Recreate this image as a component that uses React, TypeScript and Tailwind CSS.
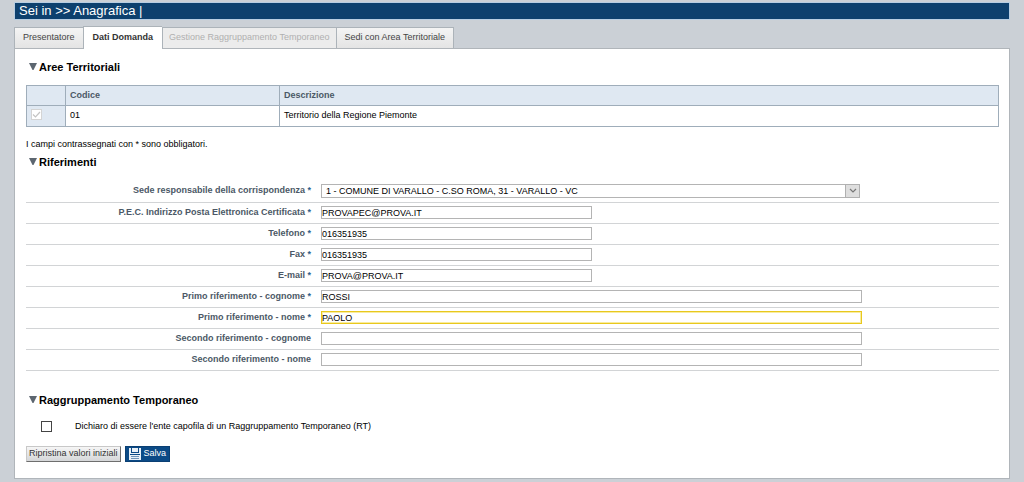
import React, { useState } from 'react';

interface Field {
  id: string;
  label: string;
  value: string;
  required?: boolean;
  wide?: boolean;
}

const TABS = [
  { id: 'presentatore', label: 'Presentatore' },
  { id: 'domanda', label: 'Dati Domanda' },
  { id: 'gestione', label: 'Gestione Raggruppamento Temporaneo', disabled: true },
  { id: 'sedi', label: 'Sedi con Area Territoriale' },
];

const FIELDS: Field[] = [
  { id: 'pec', label: 'P.E.C. Indirizzo Posta Elettronica Certificata', value: 'PROVAPEC@PROVA.IT', required: true },
  { id: 'telefono', label: 'Telefono', value: '016351935', required: true },
  { id: 'fax', label: 'Fax', value: '016351935', required: true },
  { id: 'email', label: 'E-mail', value: 'PROVA@PROVA.IT', required: true },
  { id: 'cognome1', label: 'Primo riferimento - cognome', value: 'ROSSI', required: true, wide: true },
  { id: 'nome1', label: 'Primo riferimento - nome', value: 'PAOLO', required: true, wide: true },
  { id: 'cognome2', label: 'Secondo riferimento - cognome', value: '', wide: true },
  { id: 'nome2', label: 'Secondo riferimento - nome', value: '', wide: true },
];

const SEDE = '1 - COMUNE DI VARALLO - C.SO ROMA, 31 - VARALLO - VC';

function SectionTitle({ children }: { children: React.ReactNode }) {
  return (
    <h2 className="flex items-center gap-0.5 pl-[3px] text-[11px] leading-4 font-bold text-black">
      <svg className="h-2 w-2" viewBox="0 0 8 8" aria-hidden="true">
        <path d="M0 0h8L4.5 7h-1z" fill="#5c6670" />
      </svg>
      {children}
    </h2>
  );
}

interface FormRowProps {
  id: string;
  label: string;
  required?: boolean;
  children: React.ReactNode;
}

function FormRow({ id, label, required, children }: FormRowProps) {
  return (
    <div className="grid grid-cols-[285px_minmax(0,1fr)] items-start gap-2.5 border-b border-[#d2d4d6] pt-[3px] pb-1">
      <label htmlFor={id} className="text-right text-[9px] leading-3 font-bold text-[#4b5866]">
        {label}
        {required && <span className="text-[#2f5f8c]"> *</span>}
      </label>
      {children}
    </div>
  );
}

function SaveIcon() {
  return (
    <svg className="h-3 w-3" viewBox="0 0 12 12" aria-hidden="true">
      <path d="M0 0h12v12H0z" fill="#e9f0f7" />
      <path d="M2 0h1v4h6V0h1v5H2z" fill="#0b4a86" />
      <path d="M1 6h10v1H1z" fill="#0b4a86" />
      <path d="M2 8h8v1H2zM2 10h8v1H2z" fill="#6f94b8" />
    </svg>
  );
}

export default function App() {
  const [tab, setTab] = useState('domanda');
  const [focused, setFocused] = useState('nome1');
  const [values, setValues] = useState<Record<string, string>>(
    Object.fromEntries(FIELDS.map((f) => [f.id, f.value]))
  );

  const tabClass = (id: string, disabled?: boolean) => {
    if (id === tab) return 'h-[23px] border-t border-l bg-white px-[9px] font-bold text-[#333] relative -mb-px';
    if (disabled) return 'h-[21px] border-t border-l bg-[#ececec] px-1.5 text-[#b0b0b0]';
    return 'h-[21px] border-t border-l bg-linear-to-b from-[#f4f4f4] to-[#e4e4e4] px-2 text-[#444]';
  };

  return (
    <div className="min-h-screen bg-[#cbd0d6] px-3.5 pt-0.5 pb-0.5 font-['Liberation_Sans',Arial,sans-serif] text-[9px] text-black">
      <header className="border border-[#b7cde2] bg-[#0d406e] pl-1 text-[13px] leading-4 text-white">
        Sei in &gt;&gt; Anagrafica |
      </header>

      <nav className="flex items-end pt-1.5">
        {TABS.map((t) => (
          <button
            key={t.id}
            type="button"
            disabled={t.disabled}
            onClick={() => setTab(t.id)}
            className={`border-[#acb3b9] whitespace-nowrap last:border-r ${tabClass(t.id, t.disabled)}`}
          >
            {t.label}
          </button>
        ))}
      </nav>

      <main className="border border-[#b0b5ba] bg-white pt-2.5 pr-2.5 pb-4 pl-[11px]">
        <SectionTitle>Aree Territoriali</SectionTitle>
        <table className="mt-2.5 w-full border-collapse text-left">
          <thead>
            <tr className="h-5 bg-[#dfe8f2] text-[#4b5866]">
              <th className="w-[39px] border border-[#9fadba]" />
              <th className="w-[214px] border border-[#9fadba] px-1">Codice</th>
              <th className="border border-[#9fadba] px-1">Descrizione</th>
            </tr>
          </thead>
          <tbody>
            <tr className="h-[21px]">
              <td className="border border-[#9fadba] bg-[#dfe8f2] px-1 pt-[3px] align-top">
                <span className="grid h-[11px] w-[11px]">
                  <input
                    type="checkbox"
                    aria-label="Seleziona area 01"
                    checked
                    disabled
                    className="col-start-1 row-start-1 h-[11px] w-[11px] appearance-none border border-[#d4d4d4] bg-white"
                  />
                  <svg className="col-start-1 row-start-1 h-[11px] w-[11px]" viewBox="0 0 11 11" aria-hidden="true">
                    <path d="M2 5.5l2.5 2.5L9 3" fill="none" stroke="#c4c4c4" strokeWidth="1.2" />
                  </svg>
                </span>
              </td>
              <td className="border border-[#9fadba] px-1">01</td>
              <td className="border border-[#9fadba] px-1">Territorio della Regione Piemonte</td>
            </tr>
          </tbody>
        </table>

        <p className="mt-[11px] leading-3">I campi contrassegnati con * sono obbligatori.</p>
        <div className="mt-1">
          <SectionTitle>Riferimenti</SectionTitle>
        </div>

        <form className="mt-[11px]" onSubmit={(e) => e.preventDefault()}>
          <FormRow id="sede" label="Sede responsabile della corrispondenza" required>
            <div className="relative w-full max-w-[539px]">
              <select
                id="sede"
                className="block h-3.5 w-full appearance-none border border-[#b4b4b4] bg-white pr-4 pl-1 leading-3 outline-none"
              >
                <option>{SEDE}</option>
              </select>
              <span className="pointer-events-none absolute inset-y-0 right-0 flex w-[15px] items-center justify-center border border-[#b0b0b0] bg-[#dedede]">
                <svg className="h-1.5 w-2" viewBox="0 0 8 6" aria-hidden="true">
                  <path d="M1 1l3 3 3-3" fill="none" stroke="#777" strokeWidth="1.2" />
                </svg>
              </span>
            </div>
          </FormRow>
          {FIELDS.map((f) => (
            <FormRow key={f.id} id={f.id} label={f.label} required={f.required}>
              <input
                id={f.id}
                type="text"
                value={values[f.id]}
                onChange={(e) => setValues({ ...values, [f.id]: e.target.value })}
                onFocus={() => setFocused(f.id)}
                className={`h-[13px] w-full border bg-white leading-3 outline-none ${
                  f.wide ? 'max-w-[541px]' : 'max-w-[271px]'
                } ${
                  focused === f.id
                    ? 'border-[#e8c81e] shadow-[inset_0_0_0_1px_#f8eca0]'
                    : 'border-[#b4b4b4]'
                }`}
              />
            </FormRow>
          ))}

          <div className="mt-[21px]">
            <SectionTitle>Raggruppamento Temporaneo</SectionTitle>
          </div>
          <div className="mt-3 flex items-center gap-[23px] pl-[15px]">
            <input
              id="capofila"
              type="checkbox"
              className="h-[11px] w-[11px] appearance-none border border-[#444] bg-white checked:bg-[#0b4a86]"
            />
            <label htmlFor="capofila" className="leading-3">
              Dichiaro di essere l'ente capofila di un Raggruppamento Temporaneo (RT)
            </label>
          </div>
          <div className="mt-3.5 flex gap-1">
            <button
              type="reset"
              className="h-4 border border-t-[#c8c8c8] border-r-[#6e6e6e] border-b-[#6e6e6e] border-l-[#c8c8c8] bg-linear-to-b from-[#f6f6f6] to-[#d4d6d8] px-0.5 whitespace-nowrap text-[#333]"
            >
              Ripristina valori iniziali
            </button>
            <button
              type="submit"
              className="flex h-4 items-center gap-[3px] border border-[#0a3f73] bg-[#0b4a86] px-[3px] text-white"
            >
              <SaveIcon />
              Salva
            </button>
          </div>
        </form>
      </main>
    </div>
  );
}
